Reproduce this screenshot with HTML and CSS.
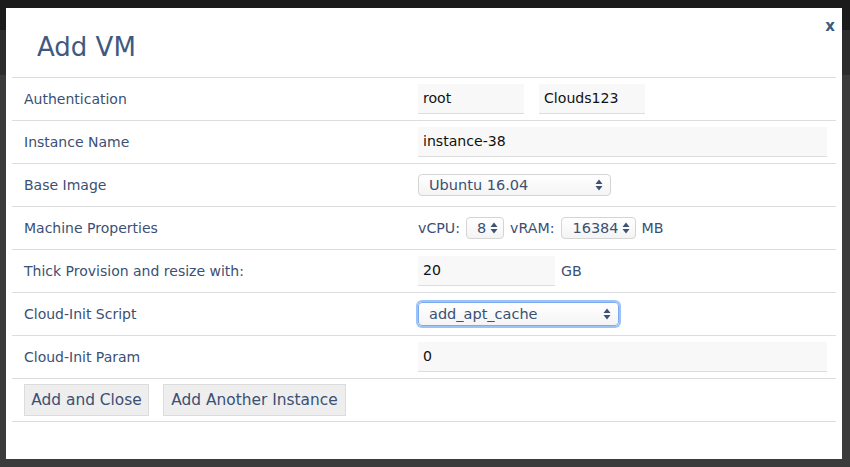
FILE: index.html
```html
<!DOCTYPE html>
<html>
<head>
<meta charset="utf-8">
<link rel="stylesheet" href="styles.css">
</head>
<body>
<div class="backdrop">
  <div class="modal">
    <div class="close">x</div>
    <div class="header"><h1 class="title">Add VM</h1></div>
    <div class="row">
      <div class="label">Authentication</div>
      <div class="value">
        <div class="input w106">root</div>
        <div class="input w106 ml15">Clouds123</div>
      </div>
    </div>
    <div class="row">
      <div class="label">Instance Name</div>
      <div class="value"><div class="input full">instance-38</div></div>
    </div>
    <div class="row">
      <div class="label">Base Image</div>
      <div class="value">
        <div class="select s-base"><span>Ubuntu 16.04</span>
          <svg class="arrows" width="8" height="12" viewBox="0 0 8 12"><path d="M4 0.5 L7.5 5 H0.5 Z M4 11.5 L7.5 7 H0.5 Z" fill="#3d5275"/></svg>
        </div>
      </div>
    </div>
    <div class="row">
      <div class="label">Machine Properties</div>
      <div class="value">
        <span class="txt">vCPU:</span>
        <div class="select s-cpu"><span>8</span>
          <svg class="arrows" width="8" height="12" viewBox="0 0 8 12"><path d="M4 0.5 L7.5 5 H0.5 Z M4 11.5 L7.5 7 H0.5 Z" fill="#3d5275"/></svg>
        </div>
        <span class="txt ml6">vRAM:</span>
        <div class="select s-ram"><span>16384</span>
          <svg class="arrows" width="8" height="12" viewBox="0 0 8 12"><path d="M4 0.5 L7.5 5 H0.5 Z M4 11.5 L7.5 7 H0.5 Z" fill="#3d5275"/></svg>
        </div>
        <span class="txt ml5">MB</span>
      </div>
    </div>
    <div class="row">
      <div class="label">Thick Provision and resize with:</div>
      <div class="value">
        <div class="input w137">20</div>
        <span class="txt ml6">GB</span>
      </div>
    </div>
    <div class="row">
      <div class="label">Cloud-Init Script</div>
      <div class="value">
        <div class="select s-init focus"><span>add_apt_cache</span>
          <svg class="arrows" width="8" height="12" viewBox="0 0 8 12"><path d="M4 0.5 L7.5 5 H0.5 Z M4 11.5 L7.5 7 H0.5 Z" fill="#3d5275"/></svg>
        </div>
      </div>
    </div>
    <div class="row">
      <div class="label">Cloud-Init Param</div>
      <div class="value"><div class="input full">0</div></div>
    </div>
    <div class="row buttons">
      <button class="btn w125">Add and Close</button>
      <button class="btn w183">Add Another Instance</button>
    </div>
  </div>
</div>
</body>
</html>
```
FILE: styles.css
```css
html, body {
  margin: 0;
  padding: 0;
}
body {
  width: 850px;
  height: 467px;
  overflow: hidden;
  background: linear-gradient(to bottom, #1b1b1b 0, #1b1b1b 30px, #2c2c2c 30px, #2c2c2c 75px, #3b3b3b 75px);
  font-family: "DejaVu Sans", Verdana, sans-serif;
}
.backdrop {
  padding: 8px 0 0 6px;
}
.modal {
  position: relative;
  width: 824px;
  height: 451px;
  padding: 0 6px;
  background: #fff;
  box-sizing: content-box;
}
.close {
  position: absolute;
  top: 9px;
  right: 7px;
  font-size: 15px;
  font-weight: bold;
  color: #3f5a80;
  line-height: 18px;
}
.header {
  height: 69px;
  display: flex;
  align-items: center;
  padding-left: 25px;
}
.title {
  margin: 0;
  font-size: 26px;
  font-weight: normal;
  color: #3f5a80;
  line-height: 30px;
  position: relative;
  top: 4px;
}
.row {
  display: flex;
  align-items: center;
  height: 42px;
  border-top: 1px solid #dddddd;
}
.row:last-child {
  border-bottom: 1px solid #dddddd;
}
.label {
  width: 394px;
  padding-left: 12px;
  font-size: 14px;
  color: #3b5074;
}
.value {
  display: flex;
  align-items: center;
  flex: 1;
  padding-right: 9px;
}
.input {
  height: 29px;
  background: #f8f8f8;
  border-bottom: 1px solid #dddddd;
  box-sizing: content-box;
  padding-left: 5px;
  font-size: 14.1px;
  color: #111;
  line-height: 29px;
}
.w106 { width: 101px; }
.w137 { width: 132px; }
.full { flex: 1; }
.ml15 { margin-left: 15px; }
.ml6 { margin-left: 6px; }
.ml5 { margin-left: 5px; }
.txt {
  font-size: 14.2px;
  color: #3b5074;
}
.select {
  display: flex;
  align-items: center;
  justify-content: space-between;
  box-sizing: border-box;
  height: 22px;
  border: 1px solid #d4d4d4;
  border-radius: 4px;
  background: linear-gradient(#ffffff, #f4f4f4);
  padding: 0 7px 0 10px;
  font-size: 14.5px;
  color: #3b5074;
}
.s-base { width: 193px; }
.s-cpu { width: 38px; margin-left: 6px; padding-left: 10px; padding-right: 5px; }
.s-ram { width: 75px; margin-left: 7px; padding-left: 10px; padding-right: 5px; }
.s-init {
  width: 201px;
  height: 24px;
}
.focus {
  border: 1px solid #7aaaf0;
  box-shadow: 0 0 0 2px #9cc2f7;
}
.arrows {
  display: block;
  flex: none;
}
.buttons {
  padding-left: 12px;
  gap: 14px;
}
.btn {
  height: 32px;
  box-sizing: border-box;
  background: #eeeeee;
  border: 1px solid #dcdcdc;
  border-radius: 0;
  font-family: "DejaVu Sans", Verdana, sans-serif;
  font-size: 15.4px;
  color: #3b5074;
  padding: 0;
  margin: 0;
}
.w125 { width: 125px; }
.w183 { width: 183px; }
```
